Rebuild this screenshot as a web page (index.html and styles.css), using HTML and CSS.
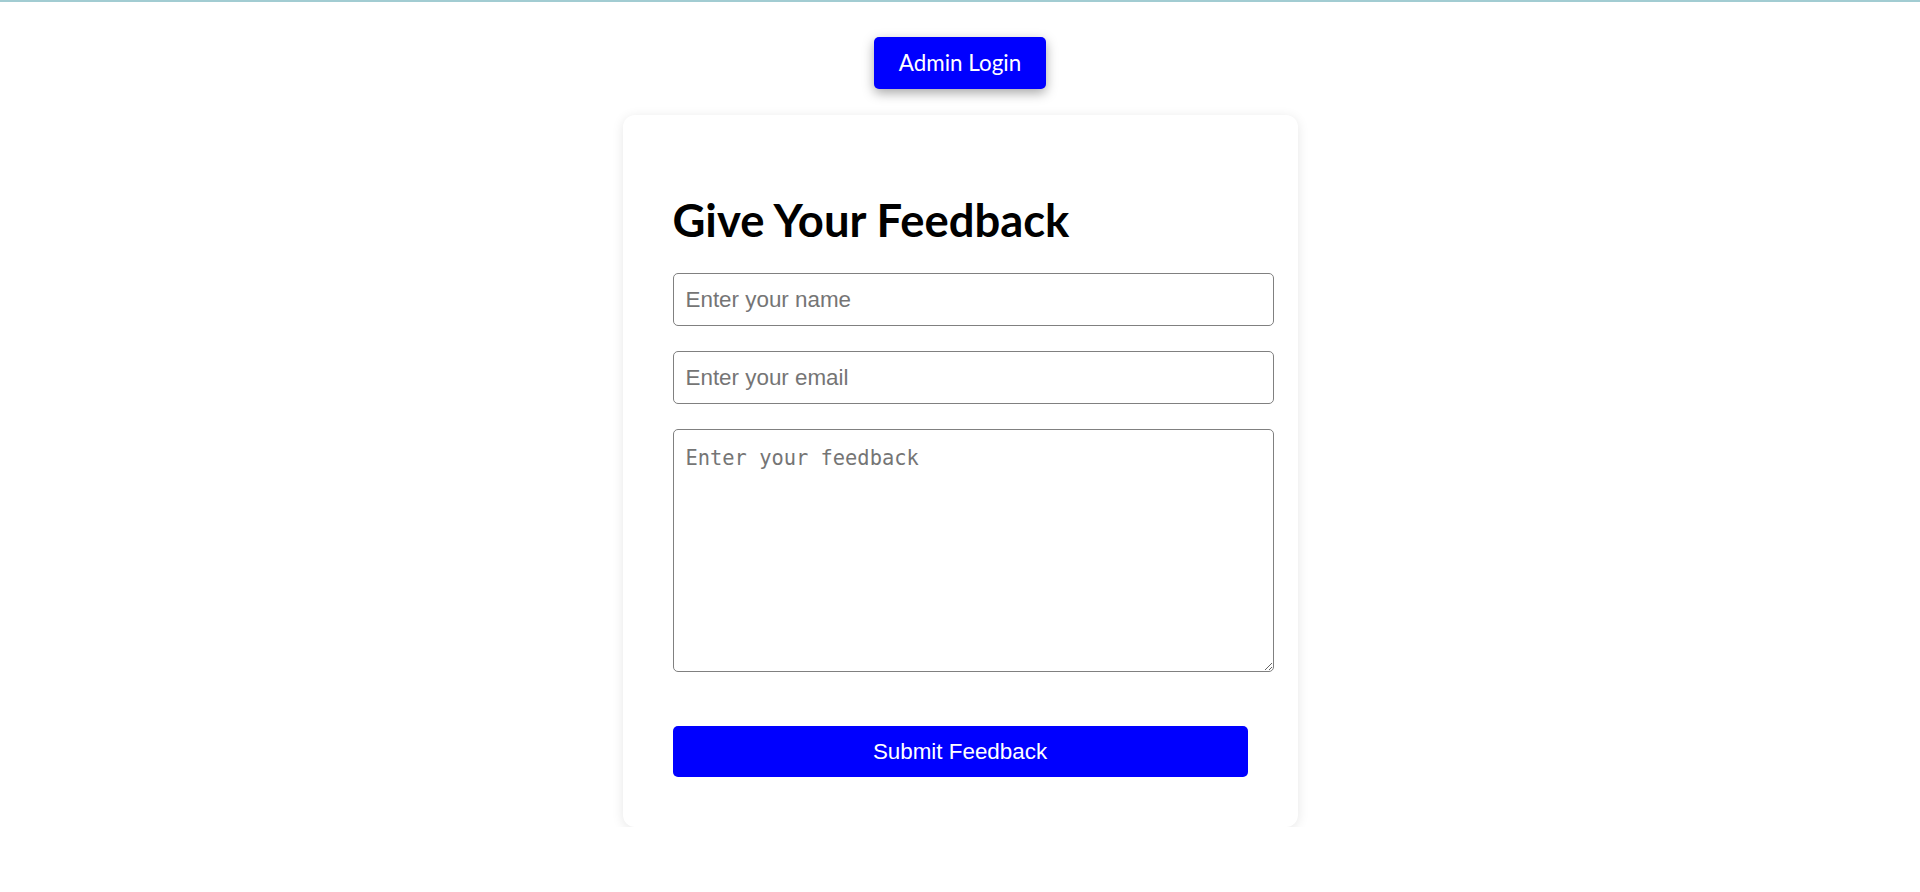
FILE: index.html
```html
<!DOCTYPE html>
<html lang="en">
<head>
<meta charset="utf-8">
<title>Feedback</title>
<link rel="stylesheet" href="styles.css">
</head>
<body>
<div class="page">
  <a class="admin-btn" href="#">Admin Login</a>
  <div class="card">
    <h1 class="title">Give Your Feedback</h1>
    <form class="form">
      <input class="field" type="text" placeholder="Enter your name">
      <input class="field" type="email" placeholder="Enter your email">
      <textarea class="field area" placeholder="Enter your feedback"></textarea>
      <button class="submit" type="button">Submit Feedback</button>
    </form>
  </div>
</div>
</body>
</html>
```

FILE: styles.css
```css
html, body {
  margin: 0;
  padding: 0;
  background: #ffffff;
}
body {
  border-top: 2px solid #a2ccd2;
  font-family: Lato, "Liberation Sans", sans-serif;
  color: #000;
}
.page {
  display: flex;
  flex-direction: column;
  align-items: center;
  padding-top: 35px;
}
.admin-btn {
  display: block;
  background: #0000ff;
  color: #ffffff;
  text-decoration: none;
  font-family: Lato, sans-serif;
  font-size: 22.4px;
  line-height: 28px;
  padding: 12px 25px;
  border-radius: 5px;
  box-shadow: 0 4px 12px rgba(0, 0, 0, 0.35);
}
.card {
  margin-top: 26px;
  width: 575px;
  padding: 50px;
  background: #ffffff;
  border-radius: 12px;
  box-shadow: 0 2px 12px rgba(0, 0, 0, 0.1);
}
.title {
  margin: 28px 0 26px;
  font-family: Lato, sans-serif;
  font-weight: 700;
  font-size: 45.4px;
  line-height: 54px;
}
.form {
  display: flex;
  flex-direction: column;
  align-items: flex-start;
}
.field {
  box-sizing: content-box;
  width: 575px;
  height: 27px;
  padding: 12px;
  margin: 0 0 25px;
  border: 1px solid #808080;
  border-radius: 5px;
  font-family: "Liberation Sans", Arial, sans-serif;
  font-size: 22.4px;
  color: #000;
  background: #fff;
}
.field::placeholder {
  color: #757575;
}
.area {
  height: 213px;
  padding-top: 16px;
  margin-bottom: 54px;
  font-family: "DejaVu Sans Mono", monospace;
  font-size: 20.4px;
  resize: vertical;
}
.submit {
  width: 575px;
  border: none;
  border-radius: 5px;
  background: #0000ff;
  color: #ffffff;
  font-family: "Liberation Sans", Arial, sans-serif;
  font-size: 22.4px;
  line-height: 27px;
  padding: 12px;
}
```
